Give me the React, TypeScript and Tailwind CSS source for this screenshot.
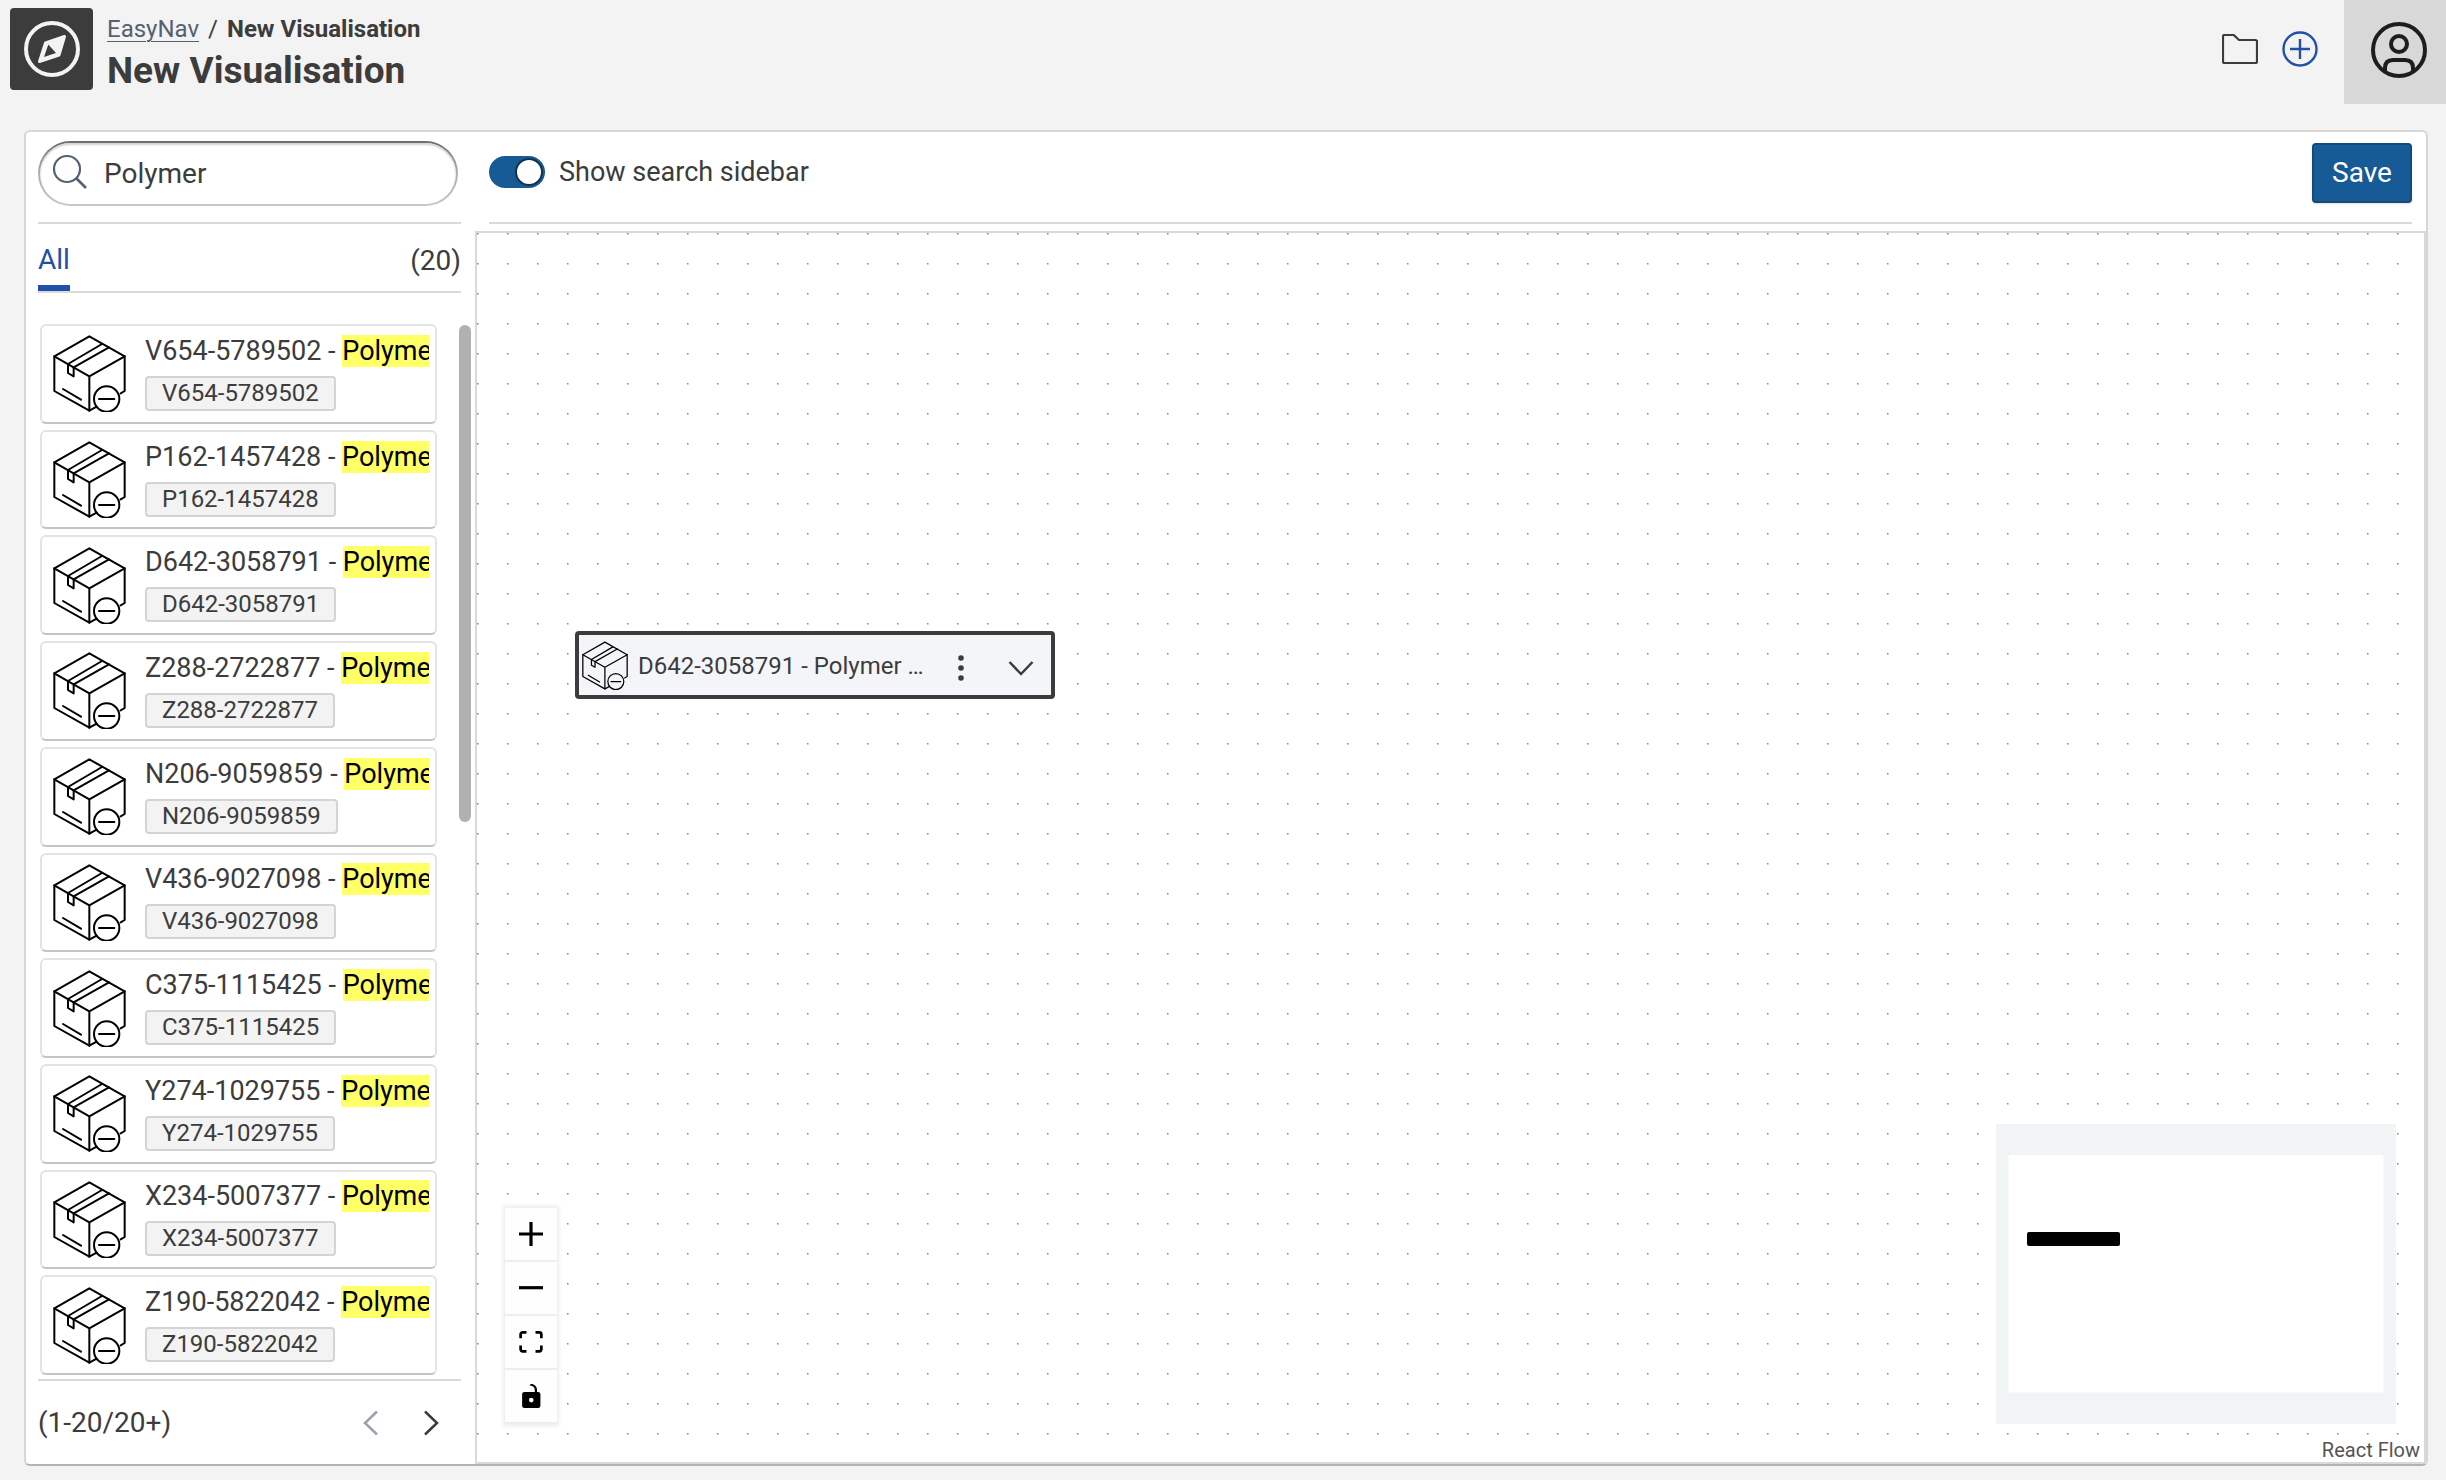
import React, { useState } from 'react'

const products = [
    'V654-5789502',
    'P162-1457428',
    'D642-3058791',
    'Z288-2722877',
    'N206-9059859',
    'V436-9027098',
    'C375-1115425',
    'Y274-1029755',
    'X234-5007377',
    'Z190-5822042',
]

export default function App() {
    const [showSidebar, setShowSidebar] = useState(true)

    return (
        <div className="flex h-screen w-full flex-col bg-[#f3f3f3] font-['Roboto',sans-serif] text-[28px] leading-8 text-[#3c3c3c]">
            <Header />
            <main className="mb-3.5 ml-6 mr-[18px] mt-[26px] flex min-h-0 flex-1 rounded-md border-2 border-[#d6d6d6] border-b-[#b4b4b4] bg-white">
                {showSidebar && <Sidebar />}
                <section className="flex min-w-0 flex-1 flex-col">
                    <Toolbar checked={showSidebar} onChange={setShowSidebar} />
                    <Canvas />
                </section>
            </main>
        </div>
    )
}

const Header = () => {
    return (
        <header className="flex h-[104px] shrink-0 items-start">
            <div className="ml-2.5 mt-2 flex h-[82px] w-[83px] items-center justify-center rounded bg-[#3c3c3c]">
                <CompassIcon />
            </div>
            <div className="ml-3.5 mt-[13px]">
                <nav aria-label="Breadcrumb" className="flex gap-[9px] text-2xl leading-8">
                    <a href="#" className="text-[#556172] underline decoration-1 underline-offset-4">
                        EasyNav
                    </a>
                    <span>/</span>
                    <span className="font-bold">New Visualisation</span>
                </nav>
                <h1 className="mt-1 text-[37px] leading-11 font-bold">New Visualisation</h1>
            </div>
            <div className="ml-auto flex items-center">
                <button aria-label="Open folder" className="mr-6 pb-1.5">
                    <FolderIcon />
                </button>
                <button aria-label="Add" className="mr-[26px] pb-1.5">
                    <AddIcon />
                </button>
                <button
                    aria-label="Account"
                    className="flex h-[104px] w-[102px] items-center justify-center bg-[#d8d8d8] pb-1 pl-2"
                >
                    <AccountIcon />
                </button>
            </div>
        </header>
    )
}

const Sidebar = () => {
    const [query, setQuery] = useState('Polymer')

    return (
        <aside className="flex w-[449px] shrink-0 flex-col">
            <div className="ml-3 mr-3.5 border-b-2 border-[#d9d9d9] pb-4 pt-[9px]">
                <div className="mr-[3px] rounded-full bg-linear-to-b from-[#6b6e6b] via-[#b0b0b0] to-[#c8c8c8] p-0.5">
                    <label className="flex h-[61px] items-center gap-4 rounded-full bg-white pl-3 pr-6 inset-shadow-[0_2px_2px_#d4d4d4]">
                        <SearchIcon />
                        <input
                            type="text"
                            aria-label="Search"
                            value={query}
                            onChange={(e) => setQuery(e.target.value)}
                            className="min-w-0 flex-1 bg-transparent outline-none"
                        />
                    </label>
                </div>
            </div>

            <div className="ml-3 mr-3.5 flex h-[69px] items-stretch justify-between border-b-2 border-[#d9d9d9]">
                <button className="border-b-6 border-[#2150a5] pt-2.5 text-[#2150a5]">All</button>
                <span className="pt-[21px]">(20)</span>
            </div>

            <div className="mb-1 mt-[31px] flex min-h-0 flex-1 pl-3.5 pr-1">
                <ul className="flex min-w-0 flex-1 flex-col gap-1.5">
                    {products.map((id) => (
                        <ProductCard key={id} id={id} />
                    ))}
                </ul>
                <div className="ml-[22px] w-3 pt-px">
                    <div className="h-[497px] rounded-full bg-[#b1b1b1]" />
                </div>
            </div>

            <div className="ml-3 mr-3.5 flex h-[85px] items-center border-t-2 border-[#d9d9d9]">
                <span className="flex-1">(1-20/20+)</span>
                <button aria-label="Previous page" disabled className="mr-11">
                    <svg width="16" height="26" viewBox="0 0 16 26" fill="none" stroke="#9aa1ac" strokeWidth="2.5">
                        <path d="M14 1.5 2 13l12 11.5" />
                    </svg>
                </button>
                <button aria-label="Next page" className="mr-[22px]">
                    <svg width="16" height="26" viewBox="0 0 16 26" fill="none" stroke="#3c3c3c" strokeWidth="2.5">
                        <path d="m2 1.5 12 11.5L2 24.5" />
                    </svg>
                </button>
            </div>
        </aside>
    )
}

const ProductCard = ({ id }: { id: string }) => {
    return (
        <li className="flex min-h-0 flex-1 items-center rounded-md border-2 border-[#e3e3e3] border-b-[#c4c4c4] pl-[11px] pr-1.5">
            <PackageIcon className="h-[77px] w-[73px] shrink-0" />
            <div className="ml-[19px] min-w-0 flex-1 pb-0.5">
                <p className="overflow-hidden whitespace-nowrap text-[27px] leading-[33px]">
                    {id} - <mark className="bg-[#ffff66] text-black">Polymer</mark>
                </p>
                <span className="mt-2 inline-block rounded border-2 border-[#d4d4d4] bg-[#f3f3f3] px-[15px] text-2xl leading-[31px] align-top">
                    {id}
                </span>
            </div>
        </li>
    )
}

const Toolbar = ({ checked, onChange }: { checked: boolean; onChange: (value: boolean) => void }) => {
    return (
        <div className="mb-[7px] ml-3.5 mr-3.5 flex h-[92px] shrink-0 items-start justify-between border-b-2 border-[#d9d9d9] pt-[11px]">
            <label className="flex h-[60px] items-center gap-3.5 pb-0.5">
                <input
                    type="checkbox"
                    role="switch"
                    checked={checked}
                    onChange={(e) => onChange(e.target.checked)}
                    className="flex h-8 w-14 appearance-none items-center rounded-full bg-[#175b96] p-0.5 before:h-7 before:w-7 before:rounded-full before:border-2 before:border-[#16324b] before:bg-white checked:justify-end"
                />
                <span className="text-[27px]">Show search sidebar</span>
            </label>
            <button className="h-15 w-25 rounded border-2 border-[#144a7b] bg-[#175b96] text-white shadow-sm">
                Save
            </button>
        </div>
    )
}

const Canvas = () => {
    return (
        <div className="relative min-h-0 flex-1 border-2 border-[#d9d9d9]">
            <DotGrid />
            <FlowNode />
            <Controls />
            <MiniMap />
            <a href="#" className="absolute bottom-0 right-0 bg-white/50 px-1 py-0.5 text-xl leading-5 text-[#555]">
                React Flow
            </a>
        </div>
    )
}

const DotGrid = () => {
    return (
        <svg className="absolute inset-0 h-full w-full" aria-hidden="true">
            <pattern id="dots" width="30" height="30" patternUnits="userSpaceOnUse">
                <rect width="1" height="1" fill="#85858a" />
                <rect x="1" width="1" height="1" fill="#c3c3c6" />
                <rect y="1" width="1" height="1" fill="#c3c3c6" />
                <rect x="1" y="1" width="1" height="1" fill="#dededf" />
            </pattern>
            <rect width="100%" height="100%" fill="url(#dots)" />
        </svg>
    )
}

const FlowNode = () => {
    return (
        <div className="absolute left-[98px] top-[398px] flex h-[68px] w-[480px] items-center rounded border-4 border-[#3c3c3c] bg-[#f4f5f8] pl-[3px] text-2xl">
            <PackageIcon className="h-[49px] w-[46px] shrink-0" />
            <span className="ml-2.5 w-72 truncate pt-0.5">D642-3058791 - Polymer Product</span>
            <button aria-label="More actions" className="ml-[25px] mt-1.5">
                <svg width="20" height="28" viewBox="0 0 20 28" fill="#3c3c3c">
                    <circle cx="10" cy="4" r="2.8" />
                    <circle cx="10" cy="14" r="2.8" />
                    <circle cx="10" cy="24" r="2.8" />
                </svg>
            </button>
            <button aria-label="Expand" className="ml-[37px] mt-1.5">
                <svg width="26" height="16" viewBox="0 0 26 16" fill="none" stroke="#3c3c3c" strokeWidth="2.5">
                    <path d="m1.5 2 11.5 12L24.5 2" />
                </svg>
            </button>
        </div>
    )
}

const Controls = () => {
    const button = 'flex h-[54px] w-[52px] items-center justify-center border-b-2 border-[#eee] bg-[#fefefe]'

    return (
        <div className="absolute bottom-[38px] left-7 flex flex-col shadow-[0_0_4px_2px_rgba(0,0,0,0.08)]">
            <button aria-label="zoom in" className={button}>
                <svg width="24" height="24" viewBox="0 0 32 32">
                    <path d="M32 18.133H18.133V32h-4.266V18.133H0v-4.266h13.867V0h4.266v13.867H32z" />
                </svg>
            </button>
            <button aria-label="zoom out" className={button}>
                <svg width="24" height="4" viewBox="0 0 32 5">
                    <path d="M0 0h32v4.2H0z" />
                </svg>
            </button>
            <button aria-label="fit view" className={button}>
                <svg width="24" height="22" viewBox="0 0 32 30">
                    <path d="M3.692 4.63c0-.53.4-.938.939-.938h5.215V0H4.708C2.13 0 0 2.054 0 4.63v5.216h3.692V4.631zM27.354 0h-5.2v3.692h5.17c.53 0 .984.4.984.939v5.215H32V4.631A4.624 4.624 0 0027.354 0zm.954 24.83c0 .532-.4.94-.939.94h-5.215v3.768h5.215c2.577 0 4.631-2.13 4.631-4.707v-5.139h-3.692v5.139zm-23.677.94c-.531 0-.939-.4-.939-.94v-5.138H0v5.139c0 2.577 2.13 4.707 4.708 4.707h5.138V25.77H4.631z" />
                </svg>
            </button>
            <button aria-label="toggle interactivity" className={button}>
                <svg width="19" height="24" viewBox="0 0 25 32">
                    <path d="M21.333 10.667H19.81V7.619C19.81 3.429 16.38 0 12.19 0c-4.114 1.828-1.37 2.133.305 2.438 1.676.305 4.42 2.59 4.42 5.181v3.048H3.047A3.056 3.056 0 000 13.714v15.238A3.056 3.056 0 003.048 32h18.285a3.056 3.056 0 003.048-3.048V13.714a3.056 3.056 0 00-3.048-3.047zM12.19 24.533a3.056 3.056 0 01-3.047-3.047 3.056 3.056 0 013.047-3.048 3.056 3.056 0 013.048 3.048 3.056 3.056 0 01-3.048 3.047z" />
                </svg>
            </button>
        </div>
    )
}

const MiniMap = () => {
    return (
        <svg
            className="absolute bottom-[38px] right-7 h-[300px] w-[400px]"
            viewBox="0 0 400 300"
            role="img"
            aria-label="Mini map"
        >
            <rect width="400" height="300" fill="#f0f4f5" />
            <rect x="12.5" y="31" width="375" height="237.5" fill="#fff" />
            <rect x="31" y="108" width="93" height="14" rx="2" fill="#000" />
        </svg>
    )
}

const PackageIcon = ({ className }: { className: string }) => {
    return (
        <svg
            className={className}
            viewBox="0 0 219 231"
            fill="none"
            stroke="#000"
            strokeWidth="6"
            strokeLinejoin="round"
            strokeLinecap="round"
        >
            <path d="M203 175l12-7V64L109 4 4 64v104l105 59 22-12" />
            <path d="M4 64l105 60 106-60M109 124v103" />
            <path d="M147 27 45 87v27l17 10V97l106-60" />
            <path d="M30 162l54 32M138 192h46" />
            <circle cx="161" cy="192" r="38" />
        </svg>
    )
}

const CompassIcon = () => {
    return (
        <svg width="56" height="56" viewBox="0 0 56 56" fill="none" strokeLinejoin="round">
            <circle cx="28" cy="28" r="26" stroke="#f3f3f3" strokeWidth="4" />
            <path d="M40.5 15.5 21.5 22 15.500 40.500 35 34z" fill="#f3f3f3" stroke="#f3f3f3" strokeWidth="3" />
            <path d="m24.300 23.500 7.700 8.500-12 4z" fill="#3c3c3c" />
        </svg>
    )
}

const SearchIcon = () => {
    return (
        <svg width="36" height="36" viewBox="0 0 36 36" fill="none" stroke="#556172" strokeWidth="2.2" className="mb-1">
            <circle cx="15" cy="15" r="13" />
            <path d="m24 24 10 10" strokeWidth="2.6" />
        </svg>
    )
}

const FolderIcon = () => {
    return (
        <svg width="36" height="30" viewBox="0 0 36 30" fill="none" stroke="#3c3c3c" strokeWidth="2.2">
            <path d="M1 2.5Q1 1 2.500 1h9.200L17 6h16.500Q35 6 35 7.500v20q0 1.500-1.500 1.500h-31Q1 29 1 27.500z" />
        </svg>
    )
}

const AddIcon = () => {
    return (
        <svg width="36" height="36" viewBox="0 0 36 36" fill="none" stroke="#2150a5" strokeWidth="2.4">
            <circle cx="18" cy="18" r="16.5" />
            <path d="M8 18h20M18 8v20" />
        </svg>
    )
}

const AccountIcon = () => {
    return (
        <svg width="56" height="56" viewBox="0 0 56 56" fill="none" stroke="#1d1d1d" strokeWidth="4">
            <circle cx="28" cy="28" r="26" />
            <circle cx="28" cy="22" r="8" />
            <path d="M14 49v-3q0-8 8-8h12q8 0 8 8v3" />
        </svg>
    )
}
